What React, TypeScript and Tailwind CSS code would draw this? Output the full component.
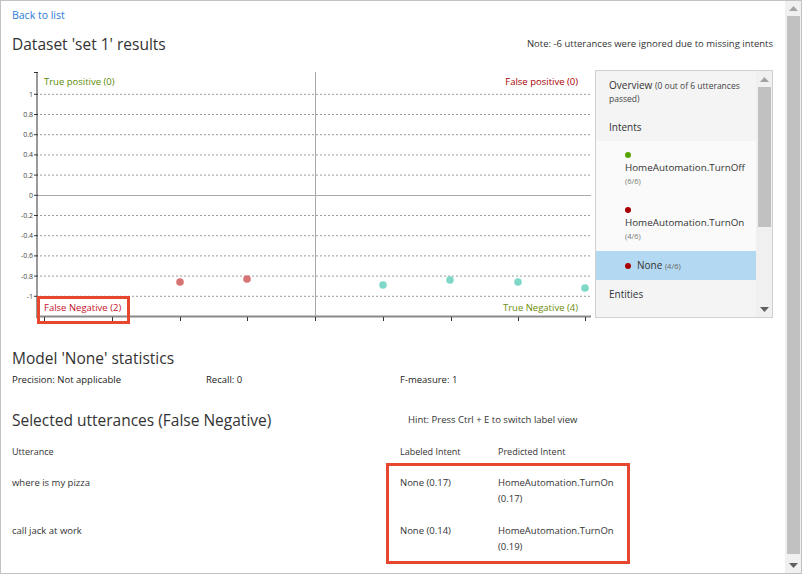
import React from 'react';

const yTicks = [1, 0.8, 0.6, 0.4, 0.2, 0, -0.2, -0.4, -0.6, -0.8, -1];
const xTicks = [44, 112, 180, 247, 315, 383, 451, 518, 585];
const yOf = (v: number) => 195.3 - v * 101;

const points = [
  { x: 180, y: 282, color: '#d67373' },
  { x: 247, y: 279, color: '#d67373' },
  { x: 383, y: 285, color: '#7ed8c7' },
  { x: 450, y: 280, color: '#7ed8c7' },
  { x: 518, y: 282, color: '#7ed8c7' },
  { x: 585, y: 288, color: '#7ed8c7' },
];

const Chart: React.FC = () => (
  <svg width={583} height={260} viewBox="12 66 583 260" className="shrink-0">
    {/* grid */}
    {yTicks.map((v) =>
      v === 0 ? null : (
        <line key={v} x1={40} x2={590} y1={yOf(v)} y2={yOf(v)} stroke="#9a9a9a" strokeWidth={1} strokeDasharray="2 2" />
      )
    )}
    <line x1={38} x2={591} y1={195.5} y2={195.5} stroke="#aaaaaa" strokeWidth={1} />
    <line x1={315.5} x2={315.5} y1={72} y2={316} stroke="#aaaaaa" strokeWidth={1} />
    {/* axes */}
    <line x1={37} x2={37} y1={72} y2={318} stroke="#9a9a9a" strokeWidth={2} />
    <line x1={34} x2={38} y1={72.5} y2={72.5} stroke="#333" strokeWidth={1} />
    <line x1={36} x2={591} y1={316.5} y2={316.5} stroke="#8a8a8a" strokeWidth={2} />
    {yTicks.map((v) => (
      <g key={'t' + v}>
        <line x1={34} x2={38} y1={yOf(v)} y2={yOf(v)} stroke="#333" strokeWidth={1} />
        <text x={33} y={yOf(v) + 2.5} textAnchor="end" fontSize={7} fill="#444" fontFamily="'Open Sans', sans-serif">
          {v}
        </text>
      </g>
    ))}
    {xTicks.map((x) => (
      <line key={x} x1={x + 0.5} x2={x + 0.5} y1={317} y2={321} stroke="#333" strokeWidth={1} />
    ))}
    {/* points */}
    {points.map((p, i) => (
      <circle key={i} cx={p.x} cy={p.y} r={3.8} fill={p.color} />
    ))}
    {/* quadrant labels */}
    <text x={44} y={85} fontSize={9.5} fill="#5b8a05" fontFamily="'Open Sans', sans-serif">True positive (0)</text>
    <text x={578} y={85} textAnchor="end" fontSize={9.5} fill="#a80000" fontFamily="'Open Sans', sans-serif">False positive (0)</text>
    <text x={44} y={311} fontSize={9.5} fill="#c50f1f" fontFamily="'Open Sans', sans-serif">False Negative (2)</text>
    <text x={578} y={311} textAnchor="end" fontSize={9.5} fill="#6b8e0e" fontFamily="'Open Sans', sans-serif">True Negative (4)</text>
    {/* highlight */}
    <rect x={38.5} y={297.5} width={90} height={25} fill="none" stroke="#e8472f" strokeWidth={3} />
  </svg>
);

const Dot: React.FC<{ color: string }> = ({ color }) => (
  <span className={`block w-[6px] h-[6px] rounded-full ${color}`} />
);

const UpArrow: React.FC = () => (
  <svg width="9" height="5" viewBox="0 0 9 5"><path d="M0 5 L4.5 0 L9 5 Z" fill="#a3a3a3" /></svg>
);
const DownArrow: React.FC = () => (
  <svg width="9" height="5" viewBox="0 0 9 5"><path d="M0 0 L4.5 5 L9 0 Z" fill="#606060" /></svg>
);

const SidePanel: React.FC = () => (
  <div className="mt-[4px] h-[248px] w-[178px] shrink-0 flex border border-[#d0d0d0] bg-[#f4f4f4] overflow-hidden text-[#333]">
    <div className="flex-1 flex flex-col">
      <div className="pl-[13px] pt-[8px]">
        <div className="text-[10px] leading-[13px] whitespace-nowrap">
          Overview <span className="text-[8.5px] text-[#444]">(0 out of 6 utterances</span>
        </div>
        <div className="text-[8.5px] leading-[13px] text-[#444]">passed)</div>
      </div>
      <div className="pl-[13px] pt-[15px] pb-[7px] text-[10px] leading-[14px]">Intents</div>
      <div className="bg-[#fafafa]">
        <div className="h-[55px] pl-[29px] pt-[11px]">
          <Dot color="bg-[#57a300]" />
          <div className="mt-[3px] text-[9.8px] leading-[14px]">HomeAutomation.TurnOff</div>
          <div className="text-[7.5px] leading-[13px] text-[#777]">(6/6)</div>
        </div>
        <div className="h-[55px] pl-[29px] pt-[11px]">
          <Dot color="bg-[#a80000]" />
          <div className="mt-[3px] text-[9.8px] leading-[14px]">HomeAutomation.TurnOn</div>
          <div className="text-[7.5px] leading-[13px] text-[#777]">(4/6)</div>
        </div>
      </div>
      <div className="h-[29px] bg-[#b3d8f1] pl-[29px] flex items-center gap-[6px]">
        <Dot color="bg-[#a80000]" />
        <span className="text-[10px]">
          None <span className="text-[7.5px] text-[#666]">(4/6)</span>
        </span>
      </div>
      <div className="pl-[13px] pt-[7px] text-[10px] leading-[14px]">Entities</div>
    </div>
    <div className="w-[16px] bg-[#f0f0f0] flex flex-col items-center">
      <div className="h-[16px] flex items-center justify-center"><UpArrow /></div>
      <div className="w-[13px] h-[140px] bg-[#c1c1c1]" />
      <div className="flex-1" />
      <div className="h-[16px] flex items-center justify-center"><DownArrow /></div>
    </div>
  </div>
);

const rows = [
  { text: 'where is my pizza', labeled: 'None (0.17)', predicted: 'HomeAutomation.TurnOn', score: '(0.17)' },
  { text: 'call jack at work', labeled: 'None (0.14)', predicted: 'HomeAutomation.TurnOn', score: '(0.19)' },
];

const App: React.FC = () => {
  return (
    <div className="w-[802px] h-[574px] flex border border-[#c2c2c2] bg-white overflow-hidden font-['Open_Sans',sans-serif] text-[#333]">
      <div className="flex-1 flex flex-col pl-[11px] pr-[12px] pt-[7px]">
        <a className="text-[10.5px] leading-[14px] text-[#2b7cd3] w-fit">Back to list</a>

        <div className="mt-[11px] flex items-center justify-between">
          <h1 className="text-[15.5px] leading-[22px] text-[#333]">Dataset 'set 1' results</h1>
          <span className="text-[9.5px] text-[#333]">Note: -6 utterances were ignored due to missing intents</span>
        </div>

        <div className="mt-[11px] flex">
          <Chart />
          <SidePanel />
        </div>

        <h2 className="mt-[21px] text-[15.5px] leading-[22px]">Model 'None' statistics</h2>
        <div className="mt-[4px] grid grid-cols-[194px_194px_1fr] text-[9.5px] leading-[14px] text-[#222]">
          <span>Precision: Not applicable</span>
          <span>Recall: 0</span>
          <span>F-measure: 1</span>
        </div>

        <div className="mt-[22px] flex items-center">
          <h2 className="w-[388px] text-[15.5px] leading-[22px]">Selected utterances (False Negative)</h2>
          <span className="pl-[8px] text-[9.5px]">Hint: Press Ctrl + E to switch label view</span>
        </div>

        <div className="mt-[14px] grid grid-cols-[388px_98px_1fr] text-[9px] leading-[14px] text-[#333]">
          <span>Utterance</span>
          <span>Labeled Intent</span>
          <span>Predicted Intent</span>
        </div>
        <div className="relative">
          {rows.map((r) => (
            <div key={r.text} className="h-[48px] pt-[16px] grid grid-cols-[388px_98px_1fr] text-[9.5px] leading-[16px] text-[#333]">
              <span>{r.text}</span>
              <span>{r.labeled}</span>
              <span>
                {r.predicted}
                <br />
                {r.score}
              </span>
            </div>
          ))}
          <div className="absolute left-[374px] top-[4px] w-[244px] h-[101px] border-[3px] border-[#e8472f]" />
        </div>
      </div>

      <div className="w-[16px] bg-[#f0f0f0] flex flex-col items-center">
        <div className="h-[15px] flex items-center justify-center"><UpArrow /></div>
        <div className="w-[13px] h-[538px] bg-[#c1c1c1]" />
        <div className="flex-1" />
        <div className="h-[16px] flex items-center justify-center"><DownArrow /></div>
      </div>
    </div>
  );
};

export default App;
